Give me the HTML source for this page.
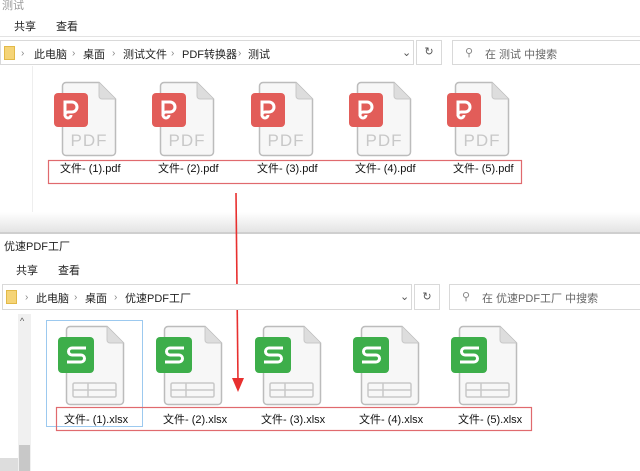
<!DOCTYPE html><html><head><meta charset="utf-8"><style>
body{margin:0;width:640px;height:471px;overflow:hidden;background:#fff;position:relative;font-family:"Liberation Sans","Noto Sans CJK SC",sans-serif;font-size:11px;color:#222}
.a{position:absolute}
.c{position:absolute;color:#888;font-size:10px;margin-top:2px}
.bar{position:absolute;border:1px solid #d9d9d9;background:#fff}
.lbl{position:absolute;font-size:11px;color:#111;white-space:nowrap}
</style></head><body>
<div class="a" style="left:2px;top:-3px;color:#999;font-size:11px">测试</div>
<div class="a" style="left:14px;top:18px">共享</div>
<div class="a" style="left:56px;top:18px">查看</div>
<div class="a" style="left:0;top:36px;width:640px;height:1px;background:#e3e3e3"></div>
<div class="bar" style="left:0;top:40px;width:412px;height:23px"></div>
<div class="a" style="left:4px;top:46px;width:9px;height:12px;background:#f5d477;border:1px solid #e2b948"></div>
<div class="c" style="left:21px;top:46px">›</div>
<div class="a" style="left:34px;top:46px">此电脑</div><div class="c" style="left:72px;top:46px">›</div>
<div class="a" style="left:83px;top:46px">桌面</div><div class="c" style="left:112px;top:46px">›</div>
<div class="a" style="left:123px;top:46px">测试文件</div><div class="c" style="left:171px;top:46px">›</div>
<div class="a" style="left:182px;top:46px">PDF转换器</div><div class="c" style="left:238px;top:46px">›</div>
<div class="a" style="left:248px;top:46px">测试</div>
<div class="a" style="left:402px;top:46px;color:#555">⌄</div>
<div class="bar" style="left:416px;top:40px;width:24px;height:23px;text-align:center;line-height:23px;color:#555">↻</div>
<div class="bar" style="left:452px;top:40px;width:190px;height:23px"></div>
<div class="a" style="left:465px;top:46px;color:#888">⚲</div>
<div class="a" style="left:485px;top:46px;color:#666">在 测试 中搜索</div>
<div class="a" style="left:32px;top:66px;width:1px;height:150px;background:#eee"></div>
<div class="a" style="left:0;top:212px;width:640px;height:20px;background:linear-gradient(#fff,#e4e4e4)"></div>
<div class="a" style="left:0;top:232px;width:640px;height:2px;background:#cfcfcf"></div>

<svg class="a" style="left:0;top:0" width="640" height="471">
<defs>
<g id="pdf"><path d="M6 0.5H39L55.5 17V70a3.5 3.5 0 0 1-3.5 3.5H6A3.5 3.5 0 0 1 2.5 70V4A3.5 3.5 0 0 1 6 .5Z" fill="#f7f7f7" stroke="#bcbcbc" stroke-width="1.5"/><path d="M39 .5V14a3 3 0 0 0 3 3H55.5" fill="#ddd" stroke="#c8c8c8"/>
<rect x="-6" y="11" width="34" height="34" rx="4" fill="#e25d59"/>
<path d="M5 34V20h7a5 5 0 0 1 0 10H8a3 3 0 1 0 3 3" fill="none" stroke="#fff" stroke-width="3"/>
<text x="29" y="64" font-family="Liberation Sans" font-size="17" fill="#c8c8c8" text-anchor="middle" letter-spacing="1">PDF</text></g>
<g id="xl"><path d="M6 0.5H43L59.5 17V75a3.5 3.5 0 0 1-3.5 3.5H6A3.5 3.5 0 0 1 2.5 75V4A3.5 3.5 0 0 1 6 .5Z" fill="#f7f7f7" stroke="#bcbcbc" stroke-width="1.5"/><path d="M43 .5V14a3 3 0 0 0 3 3H59.5" fill="#ddd" stroke="#c8c8c8"/>
<rect x="-6" y="11" width="36" height="36" rx="4" fill="#3dae4a"/>
<path d="M22 22H8a3.5 3.5 0 0 0 0 7H17a3.5 3.5 0 0 1 0 7H3" fill="none" stroke="#fff" stroke-width="3"/>
<rect x="9" y="57" width="43" height="14" rx="1.5" fill="none" stroke="#c8c8c8" stroke-width="1.5"/><path d="M9 64H52M24 57V71" stroke="#c8c8c8" stroke-width="1.5"/></g>
</defs>
<use href="#pdf" x="60" y="82"/><use href="#pdf" x="158" y="82"/><use href="#pdf" x="257" y="82"/><use href="#pdf" x="355" y="82"/><use href="#pdf" x="453" y="82"/>
<rect x="48.5" y="160.5" width="473" height="23" fill="none" stroke="#e06a6e" stroke-width="1.2"/>
<rect x="46.5" y="320.5" width="96" height="106" fill="none" stroke="#9cc9ef"/>
<use href="#xl" x="64" y="326"/><use href="#xl" x="162" y="326"/><use href="#xl" x="261" y="326"/><use href="#xl" x="359" y="326"/><use href="#xl" x="457" y="326"/>
<rect x="56.5" y="407.5" width="475" height="23" fill="none" stroke="#e06a6e" stroke-width="1.2"/>
<line x1="236" y1="193" x2="238" y2="382" stroke="#e8302f" stroke-width="1.6"/>
<path d="M232 378L244 378L238 392Z" fill="#e8302f"/>
</svg>
<div class="lbl" style="left:60px;top:160px">文件- (1).pdf</div>
<div class="lbl" style="left:158px;top:160px">文件- (2).pdf</div>
<div class="lbl" style="left:257px;top:160px">文件- (3).pdf</div>
<div class="lbl" style="left:355px;top:160px">文件- (4).pdf</div>
<div class="lbl" style="left:453px;top:160px">文件- (5).pdf</div>

<div class="a" style="left:4px;top:238px">优速PDF工厂</div>
<div class="a" style="left:16px;top:262px">共享</div>
<div class="a" style="left:58px;top:262px">查看</div>
<div class="bar" style="left:2px;top:284px;width:408px;height:24px"></div>
<div class="a" style="left:6px;top:290px;width:9px;height:12px;background:#f5d477;border:1px solid #e2b948"></div>
<div class="c" style="left:25px;top:290px">›</div>
<div class="a" style="left:36px;top:290px">此电脑</div><div class="c" style="left:74px;top:290px">›</div>
<div class="a" style="left:85px;top:290px">桌面</div><div class="c" style="left:114px;top:290px">›</div>
<div class="a" style="left:125px;top:290px">优速PDF工厂</div>
<div class="a" style="left:400px;top:290px;color:#555">⌄</div>
<div class="bar" style="left:414px;top:284px;width:24px;height:24px;text-align:center;line-height:24px;color:#555">↻</div>
<div class="bar" style="left:449px;top:284px;width:192px;height:24px"></div>
<div class="a" style="left:462px;top:290px;color:#888">⚲</div>
<div class="a" style="left:482px;top:290px;color:#666">在 优速PDF工厂 中搜索</div>
<div class="a" style="left:18px;top:314px;width:13px;height:157px;background:#f0f0f0"></div>
<div class="a" style="left:19px;top:445px;width:11px;height:26px;background:#c8c8c8"></div>
<div class="a" style="left:0;top:458px;width:18px;height:13px;background:#ddd"></div>
<div class="a" style="left:20px;top:316px;font-size:9px;color:#555">^</div>
<div class="lbl" style="left:64px;top:411px">文件- (1).xlsx</div>
<div class="lbl" style="left:163px;top:411px">文件- (2).xlsx</div>
<div class="lbl" style="left:261px;top:411px">文件- (3).xlsx</div>
<div class="lbl" style="left:359px;top:411px">文件- (4).xlsx</div>
<div class="lbl" style="left:458px;top:411px">文件- (5).xlsx</div>
</body></html>
